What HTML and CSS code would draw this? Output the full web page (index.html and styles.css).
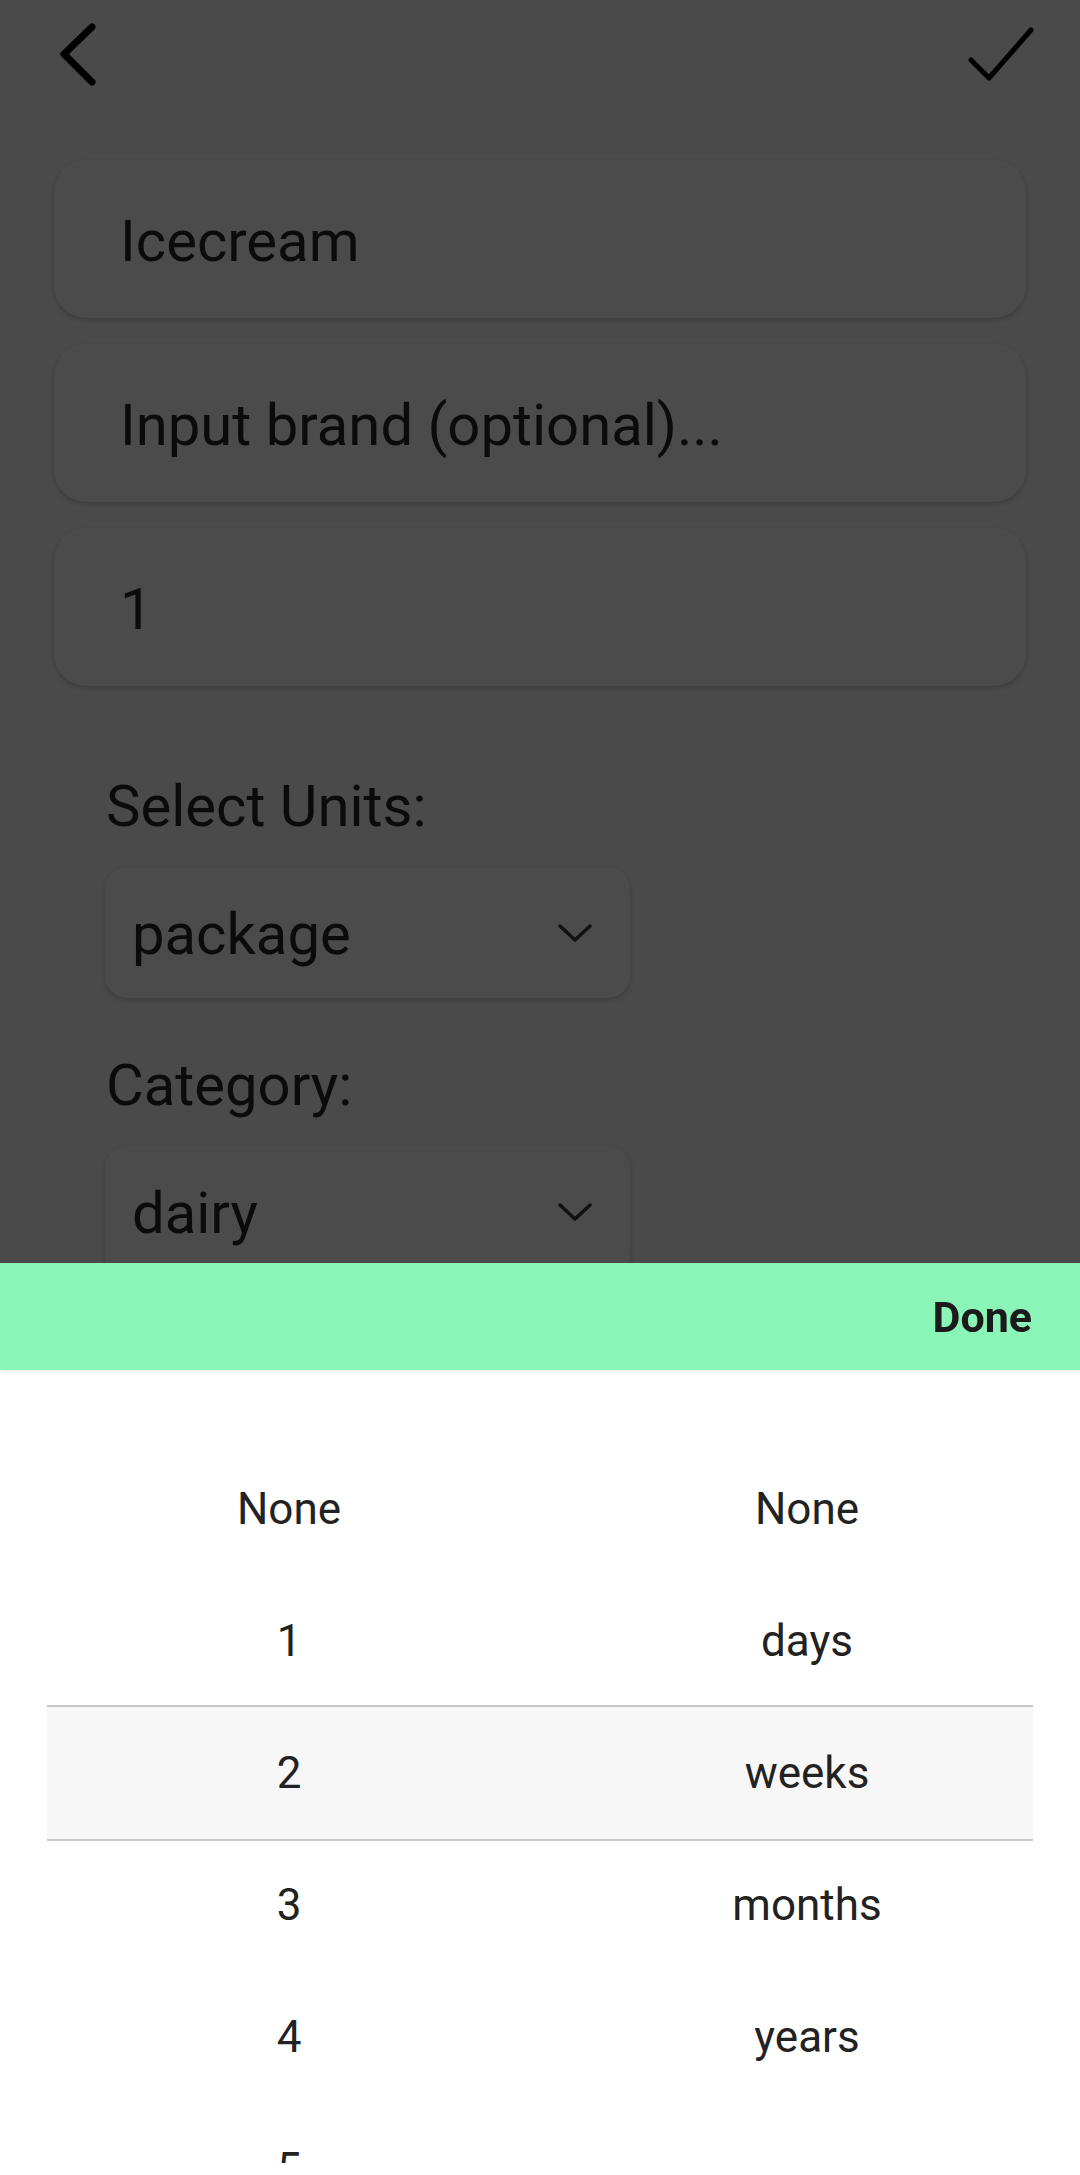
FILE: index.html
```html
<!DOCTYPE html>
<html lang="en">
<head>
<meta charset="utf-8">
<title>Add item</title>
<link rel="stylesheet" href="styles.css">
</head>
<body>
<div class="screen">
  <header class="topbar">
    <svg class="icon-back" width="48" height="72" viewBox="0 0 48 72"><polyline points="38,9 10,36 38,64" /></svg>
    <svg class="icon-check" width="72" height="60" viewBox="0 0 72 60"><polyline points="6,36 24,54 66,6" /></svg>
  </header>
  <div class="fields">
    <div class="field">Icecream</div>
    <div class="field">Input brand (optional)...</div>
    <div class="field">1</div>
  </div>
  <div class="selects">
    <div class="label">Select Units:</div>
    <div class="dropdown"><span>package</span><svg class="chev" width="34" height="20" viewBox="0 0 34 20"><polyline points="2,3 17,17 32,3" /></svg></div>
    <div class="label label-second">Category:</div>
    <div class="dropdown"><span>dairy</span><svg class="chev" width="34" height="20" viewBox="0 0 34 20"><polyline points="2,3 17,17 32,3" /></svg></div>
  </div>
</div>
<div class="sheet">
  <div class="toolbar"><span class="done">Done</span></div>
  <div class="picker">
    <div class="row"><span>None</span><span>None</span></div>
    <div class="row"><span>1</span><span>days</span></div>
    <div class="row selected"><span>2</span><span>weeks</span></div>
    <div class="row"><span>3</span><span>months</span></div>
    <div class="row"><span>4</span><span>years</span></div>
    <div class="row"><span>5</span><span></span></div>
  </div>
</div>
</body>
</html>
```
FILE: styles.css
```css
html, body {
  margin: 0;
  padding: 0;
}
body {
  width: 1080px;
  height: 2175px;
  overflow: hidden;
  background: #4a4a4a;
  font-family: Roboto, "Noto Sans", sans-serif;
  color: #0b0b0b;
}
.screen {
  height: 2175px;
}
.topbar {
  height: 160px;
  box-sizing: border-box;
  display: flex;
  justify-content: space-between;
  align-items: flex-start;
  padding: 18px 43px 0 54px;
}
.topbar svg polyline {
  fill: none;
  stroke: #000;
  stroke-linecap: round;
  stroke-linejoin: round;
}
.icon-back polyline { stroke-width: 7; }
.icon-check { margin-top: 6px; }
.icon-check polyline { stroke-width: 5; }
.fields {
  display: flex;
  flex-direction: column;
  gap: 26px;
  padding: 0 54px;
}
.field {
  height: 158px;
  box-sizing: border-box;
  border-radius: 32px;
  background: #4b4b4b;
  box-shadow: 0 2px 5px rgba(0, 0, 0, 0.18);
  display: flex;
  align-items: center;
  padding-left: 66px;
  padding-top: 4px;
  font-size: 58px;
}
.selects {
  padding: 86px 0 0 105px;
}
.label {
  font-size: 58px;
  line-height: 68px;
  padding-left: 1px;
  margin-bottom: 27px;
}
.label-second {
  margin-top: 53px;
}
.dropdown {
  width: 525px;
  height: 131px;
  box-sizing: border-box;
  border-radius: 22px;
  background: #4b4b4b;
  box-shadow: 0 2px 5px rgba(0, 0, 0, 0.18);
  display: flex;
  align-items: center;
  justify-content: space-between;
  padding: 0 38px 0 27px;
  font-size: 58px;
}
.dropdown span {
  margin-top: 2px;
}
.chev polyline {
  fill: none;
  stroke: #111;
  stroke-width: 3.5;
  stroke-linecap: round;
  stroke-linejoin: round;
}
.sheet {
  position: fixed;
  left: 0;
  right: 0;
  top: 1263px;
  bottom: 0;
  background: #fff;
}
.toolbar {
  height: 107px;
  background: #8bf5b8;
  box-shadow: 0 2px 3px rgba(0, 0, 0, 0.08);
  display: flex;
  align-items: center;
  justify-content: flex-end;
  padding-right: 48px;
  position: relative;
}
.done {
  font-weight: 700;
  font-size: 43px;
  color: #1b1b1b;
}
.picker {
  height: 793px;
  box-sizing: border-box;
  overflow: hidden;
  padding: 73px 47px 0;
}
.row {
  display: grid;
  grid-template-columns: 484px 452px;
  column-gap: 50px;
  height: 132px;
  align-items: center;
  font-size: 44px;
  color: #222;
  text-align: center;
}
.row.selected {
  height: 136px;
  margin: -2px 0;
  box-sizing: border-box;
  border-top: 2px solid #c8c8c8;
  border-bottom: 2px solid #c8c8c8;
  background: #f7f7f7;
}
```
